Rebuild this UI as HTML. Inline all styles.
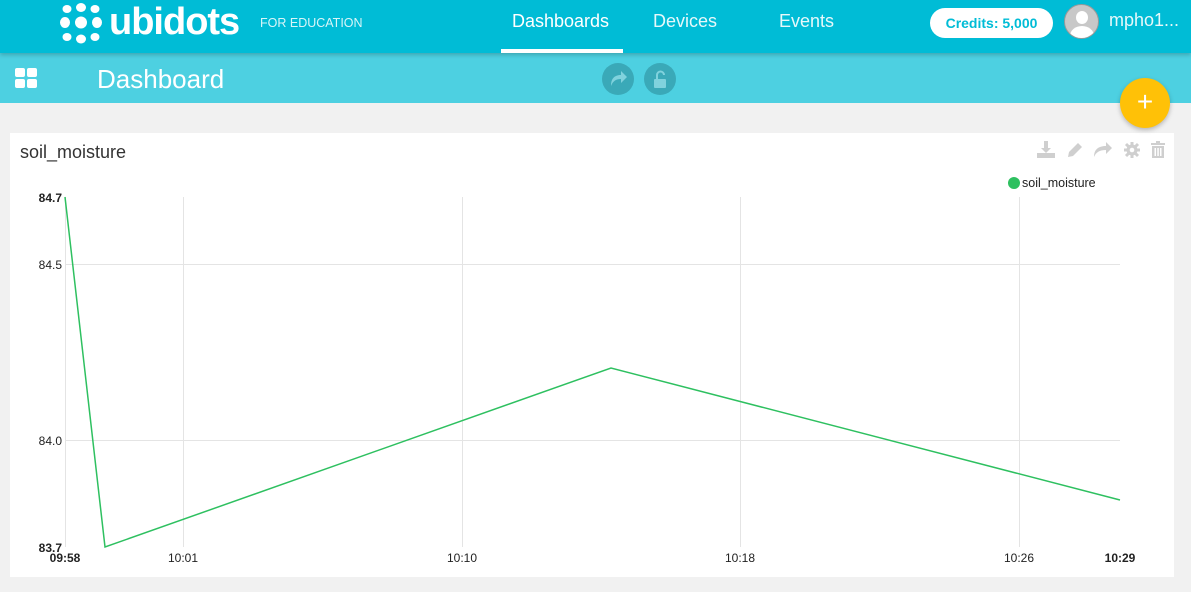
<!DOCTYPE html>
<html><head><style>
*{margin:0;padding:0;box-sizing:border-box}
body{width:1191px;height:592px;background:#f1f1f1;font-family:"Liberation Sans",sans-serif;position:relative;overflow:hidden}
.top{position:absolute;left:0;top:0;width:1191px;height:53px;background:#00bcd6;box-shadow:0 2px 4px rgba(0,0,0,.2);z-index:2}
.sub{position:absolute;left:0;top:53px;width:1191px;height:50px;background:#4dd0e1}
.t{position:absolute;color:#fff;white-space:nowrap}
.card{position:absolute;left:10px;top:133px;width:1164px;height:444px;background:#fff}
</style></head><body>
<div class="top">
<svg style="position:absolute;left:60px;top:2px" width="42" height="42" viewBox="0 0 42 42" fill="#fff">
<ellipse cx="7" cy="7" rx="4.5" ry="4"/><ellipse cx="21" cy="5.5" rx="5" ry="4.5"/><ellipse cx="35" cy="7" rx="4.5" ry="4"/>
<ellipse cx="5" cy="20.5" rx="5" ry="5.5"/><circle cx="21" cy="20.5" r="6"/><ellipse cx="37" cy="20.5" rx="5" ry="5.5"/>
<ellipse cx="7" cy="35" rx="4.5" ry="4"/><ellipse cx="21" cy="37" rx="5" ry="4.5"/><ellipse cx="35" cy="35" rx="4.5" ry="4"/></svg>
<div class="t" style="left:109px;top:1px;font-size:38px;font-weight:bold;letter-spacing:-1px">ubidots</div>
<div class="t" style="left:260px;top:16px;font-size:12.5px;opacity:.85">FOR EDUCATION</div>
<div class="t" style="left:512px;top:11px;font-size:18px">Dashboards</div>
<div style="position:absolute;left:501px;top:49px;width:122px;height:4px;background:#fff"></div>
<div class="t" style="left:653px;top:11px;font-size:18px;opacity:.9">Devices</div>
<div class="t" style="left:779px;top:11px;font-size:18px;opacity:.9">Events</div>
<div style="position:absolute;left:930px;top:8px;width:123px;height:30px;border-radius:15px;background:#fff;color:#00bcd6;font-weight:bold;font-size:14px;text-align:center;line-height:30px">Credits: 5,000</div>
<div style="position:absolute;left:1064px;top:4px;width:35px;height:35px;border-radius:50%;background:#c8c8c8;border:1px solid #999;overflow:hidden">
<div style="position:absolute;left:11px;top:6px;width:12px;height:13px;border-radius:50%;background:#fff"></div>
<div style="position:absolute;left:5px;top:21px;width:24px;height:20px;border-radius:50%;background:#fff"></div></div>
<div class="t" style="left:1109px;top:10px;font-size:18px;opacity:.9">mpho1...</div>
</div>
<div class="sub">
<svg style="position:absolute;left:15px;top:15px" width="23" height="21" fill="#fff"><rect x="0" y="0" width="10" height="9" rx="2"/><rect x="12" y="0" width="10" height="9" rx="2"/><rect x="0" y="11" width="10" height="9" rx="2"/><rect x="12" y="11" width="10" height="9" rx="2"/></svg>
<div class="t" style="left:97px;top:11px;font-size:26px;font-weight:300">Dashboard</div>
<svg style="position:absolute;left:600px;top:9px" width="80" height="34">
<circle cx="18" cy="17" r="16" fill="#3aa9b8"/><circle cx="60" cy="17" r="16" fill="#3aa9b8"/>
<path d="M11 24 C11 16 15 13 21 13 V9 L27 15 L21 21 V17 C16 17 13 19 11 24Z" fill="#80d2dd"/>
<rect x="54" y="17" width="12" height="9" rx="1" fill="#80d2dd"/>
<path d="M57 17 V13 A3.5 3.5 0 0 1 64 13" fill="none" stroke="#80d2dd" stroke-width="2"/>
</svg>
</div>
<div style="position:absolute;left:1120px;top:78px;width:50px;height:50px;border-radius:50%;background:#ffc107;box-shadow:0 2px 5px rgba(0,0,0,.25);color:#fff;font-size:28px;text-align:center;line-height:48px;z-index:3">+</div>
<div class="card">
<div style="position:absolute;left:10px;top:9px;font-size:18px;color:#333">soil_moisture</div>
</div>
<svg style="position:absolute;left:1036px;top:140px" width="132" height="20" fill="#cfcfcf">
<path d="M8 1 h4 v7 h3 l-5 5 l-5 -5 h3z"/><rect x="1" y="13" width="18" height="5"/>
<path d="M32 17 l1 -5 l9 -9 l4 4 l-9 9z"/>
<path d="M58 17 C58 9 63 6 70 6 V2 L76 8 L70 14 V10 C64 10 60 12 58 17Z"/>
<circle cx="96" cy="10" r="5.5"/><g stroke="#cfcfcf" stroke-width="3"><line x1="96" y1="2" x2="96" y2="18"/><line x1="88" y1="10" x2="104" y2="10"/><line x1="90" y1="4" x2="102" y2="16"/><line x1="102" y1="4" x2="90" y2="16"/></g><circle cx="96" cy="10" r="2.3" fill="#fff"/>
<rect x="115" y="3" width="14" height="2"/><rect x="120" y="1" width="4" height="2"/><path d="M116 6 h12 v12 h-12z"/><g fill="#fff"><rect x="118.5" y="8" width="1.5" height="8"/><rect x="121.3" y="8" width="1.5" height="8"/><rect x="124" y="8" width="1.5" height="8"/></g>
</svg>
<svg style="position:absolute;left:0;top:0" width="1191" height="592" font-family="Liberation Sans" font-size="12">
<g stroke="#e4e4e4" stroke-width="1">
<line x1="65" y1="264.5" x2="1120" y2="264.5"/><line x1="65" y1="440.5" x2="1120" y2="440.5"/>
<line x1="183.5" y1="197" x2="183.5" y2="547"/><line x1="462.5" y1="197" x2="462.5" y2="547"/><line x1="740.5" y1="197" x2="740.5" y2="547"/><line x1="1019.5" y1="197" x2="1019.5" y2="547"/>
<line x1="65.5" y1="197" x2="65.5" y2="547"/></g>
<polyline points="65,197 105,547 611,368 1120,500" fill="none" stroke="#2ec060" stroke-width="1.5"/>
<circle cx="1014" cy="183" r="6" fill="#2ec060"/>
<text x="1022" y="187" font-size="12.5" fill="#222">soil_moisture</text>
<g fill="#222" text-anchor="end"><text x="62" y="202" font-weight="bold">84.7</text><text x="62" y="269">84.5</text><text x="62" y="445">84.0</text><text x="62" y="552" font-weight="bold">83.7</text></g>
<g fill="#222" text-anchor="middle"><text x="65" y="562" font-weight="bold">09:58</text><text x="183" y="562">10:01</text><text x="462" y="562">10:10</text><text x="740" y="562">10:18</text><text x="1019" y="562">10:26</text><text x="1120" y="562" font-weight="bold">10:29</text></g>
</svg>
</body></html>
